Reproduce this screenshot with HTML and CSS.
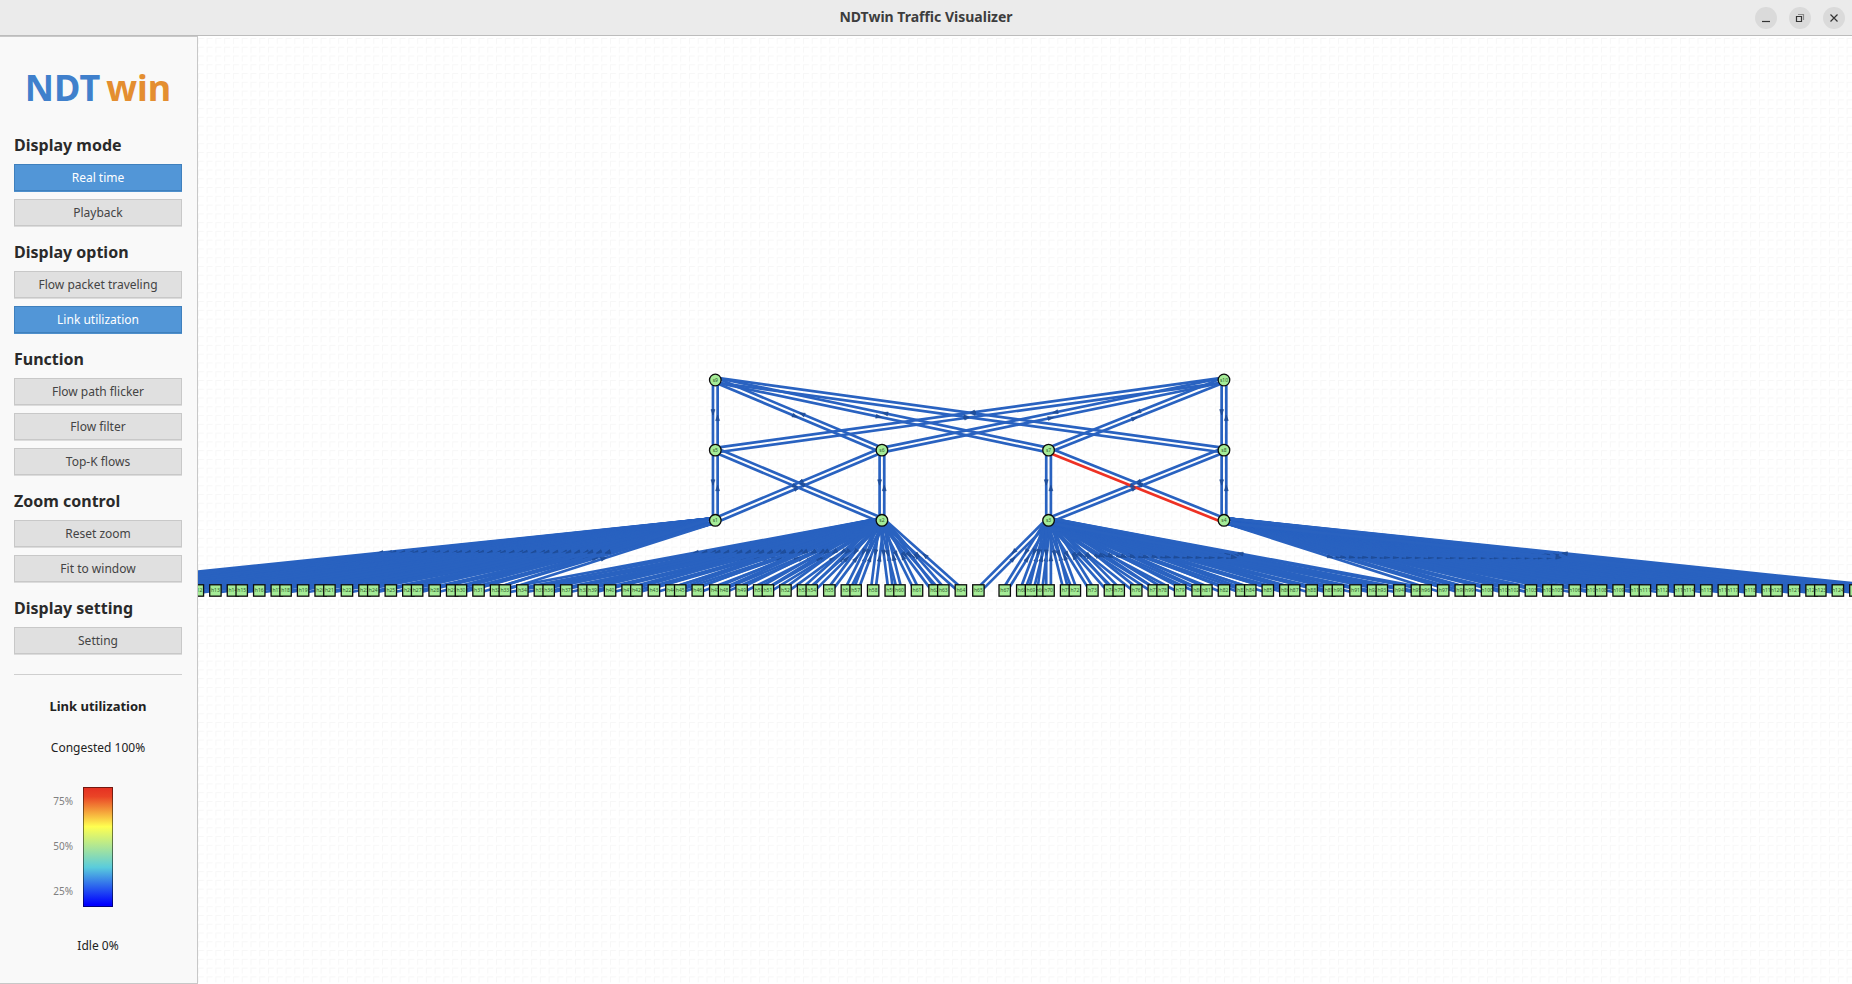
FILE: index.html
```html
<!DOCTYPE html>
<html lang="en">
<head>
<meta charset="utf-8">
<title>NDTwin Traffic Visualizer</title>
<link rel="stylesheet" href="styles.css">
</head>
<body>
<header class="titlebar">
  <h1 class="title">NDTwin Traffic Visualizer</h1>
  <div class="window-controls">
    <button class="win-btn" aria-label="Minimize"><svg viewBox="0 0 22 22"><path d="M7 14.5h8"/></svg></button>
    <button class="win-btn" aria-label="Restore"><svg viewBox="0 0 22 22"><path d="M7.5 9.5h5v5h-5z"/><path class="faint" d="M9 7.5h5.5v5.500"/></svg></button>
    <button class="win-btn" aria-label="Close"><svg viewBox="0 0 22 22"><path d="M7.500 7.500l7 7M14.500 7.500l-7 7"/></svg></button>
  </div>
</header>
<div class="workspace">
  <aside class="sidebar">
    <div class="logo"><span class="logo-ndt">NDT</span><span class="logo-win">win</span></div>
    <section class="group">
      <h2>Display mode</h2>
      <button class="btn active">Real time</button>
      <button class="btn">Playback</button>
    </section>
    <section class="group">
      <h2>Display option</h2>
      <button class="btn">Flow packet traveling</button>
      <button class="btn active">Link utilization</button>
    </section>
    <section class="group">
      <h2>Function</h2>
      <button class="btn">Flow path flicker</button>
      <button class="btn">Flow filter</button>
      <button class="btn">Top-K flows</button>
    </section>
    <section class="group">
      <h2>Zoom control</h2>
      <button class="btn">Reset zoom</button>
      <button class="btn">Fit to window</button>
    </section>
    <section class="group">
      <h2>Display setting</h2>
      <button class="btn">Setting</button>
    </section>
    <section class="legend">
      <h3>Link utilization</h3>
      <p>Congested 100%</p>
      <div class="scale">
        <div class="ticks"><span>75%</span><span>50%</span><span>25%</span></div>
        <div class="gradient"></div>
      </div>
      <p>Idle 0%</p>
    </section>
  </aside>
  <main class="canvas">
    <svg class="topology" id="topology" role="img" aria-label="Network topology"></svg>
  </main>
</div>
<script src="topology.js"></script>
</body>
</html>
```
FILE: styles.css
```css
* { box-sizing: border-box; }
body {
  margin: 0;
  height: 100vh;
  display: flex;
  flex-direction: column;
  overflow: hidden;
  font-family: "Noto Sans", "Open Sans", sans-serif;
  background: #fff;
}
.titlebar {
  flex: none;
  height: 36px;
  display: grid;
  grid-template-columns: 1fr auto 1fr;
  align-items: center;
  padding: 0 7px;
  background: #ebebeb;
  border-bottom: 1px solid #bcbcbc;
}
.title {
  grid-column: 2;
  margin: 0;
  padding-bottom: 2px;
  font-size: 14px;
  line-height: 20px;
  font-weight: 700;
  color: #3d3d3d;
}
.window-controls {
  justify-self: end;
  display: flex;
  gap: 12px;
}
.win-btn {
  width: 22px;
  height: 22px;
  padding: 0;
  border: 0;
  border-radius: 50%;
  background: #dadada;
}
.win-btn svg {
  display: block;
  width: 22px;
  height: 22px;
  fill: none;
  stroke: #333;
  stroke-width: 1.2;
}
.win-btn .faint { stroke: #8a8a8a; }
.workspace {
  flex: 1;
  min-height: 0;
  display: flex;
}
.sidebar {
  flex: none;
  width: 198px;
  display: flex;
  flex-direction: column;
  gap: 16px;
  padding: 27px 15px 0 14px;
  background: #f9f9f9;
  border: 1px solid #c8c8c8;
  border-left: 0;
}
.logo {
  display: flex;
  justify-content: center;
  gap: 6px;
  height: 48px;
  margin-bottom: 7px;
  font-size: 36px;
  line-height: 48px;
  font-weight: 700;
}
.logo-ndt { color: #4080cc; }
.logo-win { color: #e48e30; }
.group {
  display: flex;
  flex-direction: column;
  gap: 8px;
}
.group h2 {
  margin: 0;
  font-size: 16px;
  line-height: 21px;
  font-weight: 700;
  color: #2a2a2a;
}
.btn {
  height: 27px;
  padding: 0;
  border: 1px solid #c8c8c8;
  background: #e0e0e0;
  box-shadow: 0 1px 0 #dcdcdc;
  font: 400 12px/16px "Noto Sans", "Open Sans", sans-serif;
  color: #444;
}
.btn.active {
  border-color: #3f80bd;
  background: #5296d7;
  box-shadow: 0 1px 0 #4f90cc;
  color: #fff;
}
.legend {
  display: flex;
  flex-direction: column;
  align-items: center;
  border-top: 1px solid #cfcfcf;
  margin-top: 4px;
  padding-top: 22px;
  color: #222;
}
.legend h3 {
  margin: 0 0 25px;
  font-size: 13px;
  line-height: 18px;
  font-weight: 700;
}
.legend p {
  margin: 0;
  font-size: 12px;
  line-height: 16px;
}
.scale {
  align-self: stretch;
  display: grid;
  grid-template-columns: 1fr 30px 1fr;
  column-gap: 10px;
  margin: 31px 0;
}
.ticks {
  display: flex;
  flex-direction: column;
  justify-content: space-between;
  align-items: flex-end;
  padding: 7px 0 9px;
  font-size: 10px;
  line-height: 14px;
  color: #808080;
}
.gradient {
  height: 120px;
  border: 1px solid rgba(0, 0, 0, 0.5);
  background: linear-gradient(#e52f22, #ea4426 8%, #ffff50 33%, #5accdc 67%, #0000ff 98%) border-box;
}
.canvas {
  flex: 1;
  min-width: 0;
  overflow: hidden;
}
.topology {
  display: block;
  width: 100%;
  height: 100%;
}
.grid-line { stroke: #f7f7f7; stroke-width: 1; stroke-dasharray: 6 2.770; fill: none; }
.link { stroke: #2962c0; stroke-width: 2.700; }
.link.hot { stroke: #ee3124; }
.arrow { fill: #1f4f9e; stroke: #1b4488; stroke-width: 0.500; }
.node { fill: #a5ec97; stroke: #0c0c0c; stroke-width: 1.300; }
.label {
  font-family: "Noto Sans", "Open Sans", sans-serif;
  font-size: 5px;
  fill: #2f5a2c;
  text-anchor: middle;
}
```
FILE: topology.js
```js
const NS = "http://www.w3.org/2000/svg";
const svg = document.getElementById("topology");

// Grid pitch and the canvas position of grid point (0, 0).
const PITCH = 8.77;
const ORIGIN = { x: 517.3, y: 344 };
const LANE = 2.33;

const at = (col, row) => ({ x: ORIGIN.x + col * PITCH, y: ORIGIN.y + row * PITCH });

function add(parent, name, attrs, text) {
  const el = document.createElementNS(NS, name);
  for (const key in attrs) el.setAttribute(key, attrs[key]);
  if (text) el.textContent = text;
  parent.appendChild(el);
  return el;
}

const nodes = {
  s9: at(0, 0), s10: at(58, 0),
  s5: at(0, 8), s6: at(19, 8), s7: at(38, 8), s8: at(58, 8),
  s1: at(0, 16), s2: at(19, 16), s3: at(38, 16), s4: at(58, 16)
};
const hostStep = [0, 2, 3];
for (let n = 1; n <= 128; n++) {
  const col = -77 + 5 * Math.floor((n - 1) / 3) + hostStep[(n - 1) % 3];
  nodes["h" + n] = at(n === 66 ? 37 : col, 24);
}

// Background grid
const defs = add(svg, "defs", {});
const pattern = add(defs, "pattern", {
  id: "grid", width: PITCH, height: PITCH, patternUnits: "userSpaceOnUse",
  x: ORIGIN.x % PITCH, y: ORIGIN.y % PITCH
});
add(pattern, "path", { class: "grid-line", d: `M0 0.5H${PITCH}M0.5 0V${PITCH}` });
add(svg, "rect", { width: "100%", height: "100%", fill: "url(#grid)" });

// One lane per direction, kept to the right of its heading
function lane(from, to, hot) {
  const a = nodes[from], b = nodes[to];
  const len = Math.hypot(b.x - a.x, b.y - a.y);
  const ux = (b.x - a.x) / len, uy = (b.y - a.y) / len;
  const ox = -uy * LANE, oy = ux * LANE;
  add(svg, "line", {
    class: hot ? "link hot" : "link",
    x1: a.x + ox, y1: a.y + oy, x2: b.x + ox, y2: b.y + oy
  });
  const mx = (a.x + b.x) / 2 + ox, my = (a.y + b.y) / 2 + oy;
  const bx = mx - ux * 5.5, by = my - uy * 5.5;
  add(svg, "path", {
    class: "arrow",
    d: `M${mx} ${my}L${bx - uy * 2} ${by + ux * 2}L${bx + uy * 2} ${by - ux * 2}Z`
  });
}

const trunks = [
  ["s1", "s5"], ["s1", "s6"], ["s2", "s5"], ["s2", "s6"],
  ["s3", "s7"], ["s3", "s8"], ["s4", "s7"], ["s4", "s8"],
  ["s5", "s9"], ["s5", "s10"], ["s6", "s9"], ["s6", "s10"],
  ["s7", "s9"], ["s7", "s10"], ["s8", "s9"], ["s8", "s10"]
];
for (const [low, high] of trunks) {
  lane(high, low, low === "s4" && high === "s7");
  lane(low, high, false);
}
for (let n = 1; n <= 128; n++) {
  const edge = "s" + Math.ceil(n / 32);
  lane(edge, "h" + n, false);
  lane("h" + n, edge, false);
}

// Nodes outside the visible canvas are skipped
const viewWidth = svg.getBoundingClientRect().width;
for (const name in nodes) {
  const p = nodes[name];
  if (p.x < -6 || p.x > viewWidth + 6) continue;
  if (name[0] === "s") add(svg, "circle", { class: "node", cx: p.x, cy: p.y, r: 5.8 });
  else add(svg, "rect", { class: "node", x: p.x - 5.7, y: p.y - 5.7, width: 11.4, height: 11.4 });
  if (p.x < viewWidth) add(svg, "text", { class: "label", x: p.x, y: p.y + 2 }, name);
}
```
